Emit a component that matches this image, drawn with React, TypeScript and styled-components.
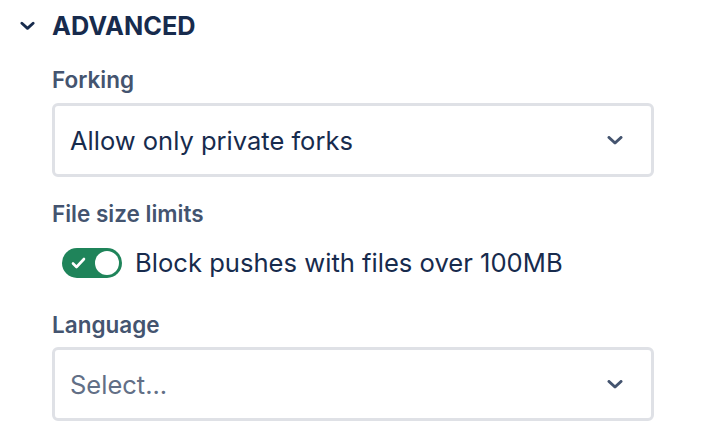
import styled, { createGlobalStyle } from "styled-components";

const GlobalStyle = createGlobalStyle`
  body {
    margin: 0;
    background: #ffffff;
    font-family: Inter, "Noto Sans", "Liberation Sans", sans-serif;
    color: #172b4d;
  }
`;

const Section = styled.section`
  padding: 8px 0 0 20px;
`;

const Header = styled.div`
  display: flex;
  align-items: center;
  gap: 17px;
  height: 36px;
`;

const HeaderTitle = styled.h2`
  margin: 0;
  font-size: 25.3px;
  line-height: 36px;
  font-weight: 700;
  color: #172b4d;
`;

const Fields = styled.div`
  margin-left: 32px;
  width: 602px;
  display: flex;
  flex-direction: column;
`;

const Label = styled.label<{ $top: number }>`
  display: block;
  margin-top: ${(p) => p.$top}px;
  font-size: 22.5px;
  line-height: 24px;
  font-weight: 600;
  color: #44546f;
`;

const SelectBox = styled.div<{ $top?: number }>`
  box-sizing: border-box;
  margin-top: ${(p) => p.$top ?? 11}px;
  height: 74px;
  border: 3px solid #dfe1e6;
  border-radius: 6px;
  background: #ffffff;
  display: flex;
  align-items: center;
  justify-content: space-between;
  padding: 0 28px 0 15px;
`;

const SelectValue = styled.span<{ $placeholder?: boolean }>`
  font-size: 25.5px;
  color: ${(p) => (p.$placeholder ? "#626f86" : "#172b4d")};
`;

const ToggleRow = styled.div`
  display: flex;
  align-items: center;
  gap: 13px;
  margin: 21px 0 0 10px;
`;

const Toggle = styled.span`
  box-sizing: border-box;
  width: 60px;
  height: 30px;
  border-radius: 15px;
  background: #1f845a;
  display: flex;
  align-items: center;
  justify-content: space-between;
  padding: 0 3px 0 9px;
`;

const Knob = styled.span`
  width: 24px;
  height: 24px;
  border-radius: 50%;
  background: #ffffff;
`;

const ToggleText = styled.span`
  font-size: 25.6px;
  color: #172b4d;
`;

const Chevron = ({ w, h, color }: { w: number; h: number; color: string }) => (
  <svg width={w} height={h} viewBox="0 0 16 9" fill="none">
    <path
      d="M2 1.5 L8 7 L14 1.5"
      stroke={color}
      strokeWidth={3}
      strokeLinecap="round"
      strokeLinejoin="round"
    />
  </svg>
);

const Check = () => (
  <svg width="15" height="12" viewBox="0 0 15 12" fill="none">
    <path
      d="M2 6.5 L5.5 10 L13 2"
      stroke="#ffffff"
      strokeWidth={2.6}
      strokeLinecap="round"
      strokeLinejoin="round"
    />
  </svg>
);

export default function App() {
  return (
    <>
      <GlobalStyle />
      <Section>
        <Header>
          <Chevron w={15} h={10} color="#172b4d" />
          <HeaderTitle>ADVANCED</HeaderTitle>
        </Header>
        <Fields>
          <Label $top={24}>Forking</Label>
          <SelectBox>
            <SelectValue>Allow only private forks</SelectValue>
            <Chevron w={16} h={9} color="#44546f" />
          </SelectBox>

          <Label $top={25}>File size limits</Label>
          <ToggleRow>
            <Toggle>
              <Check />
              <Knob />
            </Toggle>
            <ToggleText>Block pushes with files over 100MB</ToggleText>
          </ToggleRow>

          <Label $top={35}>Language</Label>
          <SelectBox $top={10}>
            <SelectValue $placeholder>Select...</SelectValue>
            <Chevron w={16} h={9} color="#44546f" />
          </SelectBox>
        </Fields>
      </Section>
    </>
  );
}
